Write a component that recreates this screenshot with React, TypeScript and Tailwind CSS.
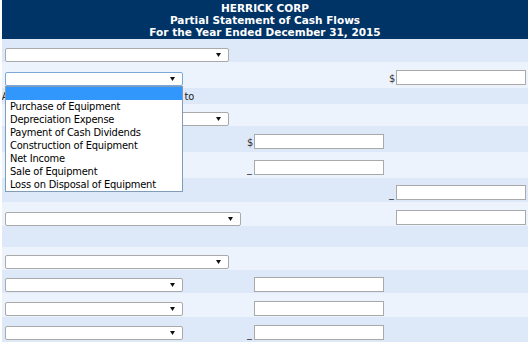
import type { ReactNode } from 'react';

const OPTIONS = [
  'Purchase of Equipment',
  'Depreciation Expense',
  'Payment of Cash Dividends',
  'Construction of Equipment',
  'Net Income',
  'Sale of Equipment',
  'Loss on Disposal of Equipment',
];

const BODY_FONT = '"DejaVu Sans Condensed", "DejaVu Sans", Verdana, sans-serif';

function Arrow() {
  return (
    <svg width="5" height="4" viewBox="0 0 5 4" className="shrink-0">
      <path d="M0 0H5L2.5 4Z" fill="#111" />
    </svg>
  );
}

function Select({ width, top, focused }: { width: string; top: number; focused?: boolean }) {
  return (
    <div
      className={`h-[14px] bg-white border rounded-[2px] flex items-center justify-end pr-[7px] ${width} ${
        focused ? 'border-[#7ba7d9]' : 'border-[#a9a9a9]'
      }`}
      style={{ marginTop: top }}
    >
      <Arrow />
    </div>
  );
}

function Amount({ prefix, top }: { prefix?: string; top: number }) {
  return (
    <div className="flex items-end w-[137px]" style={{ marginTop: top }}>
      <span className="w-[7px] text-[11px] leading-[12px] text-[#333]">{prefix}</span>
      <div className="w-[130px] h-[15px] bg-white border border-[#a9a9a9]" />
    </div>
  );
}

interface RowProps {
  h: string;
  dark?: boolean;
  left?: ReactNode;
  mid?: ReactNode;
  right?: ReactNode;
}

function Row({ h, dark, left, mid, right }: RowProps) {
  return (
    <div className={`relative flex items-start ${h} ${dark ? 'bg-[#dde8f8]' : 'bg-[#edf3fd]'}`}>
      <div className="w-[245px] pl-[3px] flex items-start">{left}</div>
      <div className="w-[137px]">{mid}</div>
      <div className="w-[5px]" />
      <div className="w-[137px]">{right}</div>
    </div>
  );
}

export default function App() {
  return (
    <div className="w-[530px] h-[345px] bg-white" style={{ fontFamily: BODY_FONT }}>
      <div className="ml-[2px] w-[526px]">
        <div
          className="h-[39px] bg-[#003366] text-white font-bold text-[10.5px] leading-[12px] text-center pt-[2px]"
          style={{ fontFamily: '"DejaVu Sans", Verdana, sans-serif' }}
        >
          <div>HERRICK CORP</div>
          <div>Partial Statement of Cash Flows</div>
          <div>For the Year Ended December 31, 2015</div>
        </div>

        <Row h="h-[23px]" dark left={<Select width="w-[224px]" top={9} />} />

        <div className="relative z-10">
          <Row
            h="h-[26px]"
            left={
              <div className="relative">
                <Select width="w-[178px]" top={10} focused />
                <div className="absolute left-0 top-[24px] w-[178px] bg-white border border-[#7f9db9] text-[11px] leading-[13px] tracking-[-0.2px] text-black">
                  <div className="h-[13px] bg-[#3297fd]" />
                  {OPTIONS.map((o) => (
                    <div key={o} className="h-[13px] pl-[4px] whitespace-nowrap">
                      {o}
                    </div>
                  ))}
                </div>
              </div>
            }
            right={<Amount prefix="$" top={8} />}
          />
        </div>

        <div className="h-[16px] bg-[#dde8f8] flex items-center">
          <div className="w-[192px] overflow-hidden flex justify-end whitespace-nowrap text-[11px] leading-[13px] tracking-[-0.2px] text-[#222]">
            <span className="shrink-0">Adjustments to reconcile net income</span>
            <span className="shrink-0 pl-[8px]">to</span>
          </div>
        </div>

        <Row h="h-[22px]" left={<Select width="w-[224px]" top={8} />} />
        <Row h="h-[26px]" dark mid={<Amount prefix="$" top={8} />} />
        <Row h="h-[26px]" mid={<Amount prefix="_" top={8} />} />
        <Row h="h-[24px]" dark right={<Amount prefix="_" top={7} />} />
        <Row h="h-[24px]" left={<Select width="w-[236px]" top={10} />} right={<Amount top={8} />} />
        <Row h="h-[21px]" dark />
        <Row h="h-[23px]" left={<Select width="w-[224px]" top={8} />} />
        <Row h="h-[23px]" dark left={<Select width="w-[178px]" top={8} />} mid={<Amount top={7} />} />
        <Row h="h-[24px]" left={<Select width="w-[178px]" top={9} />} mid={<Amount top={8} />} />
        <Row h="h-[25px]" dark left={<Select width="w-[178px]" top={9} />} mid={<Amount prefix="_" top={8} />} />
      </div>
    </div>
  );
}
